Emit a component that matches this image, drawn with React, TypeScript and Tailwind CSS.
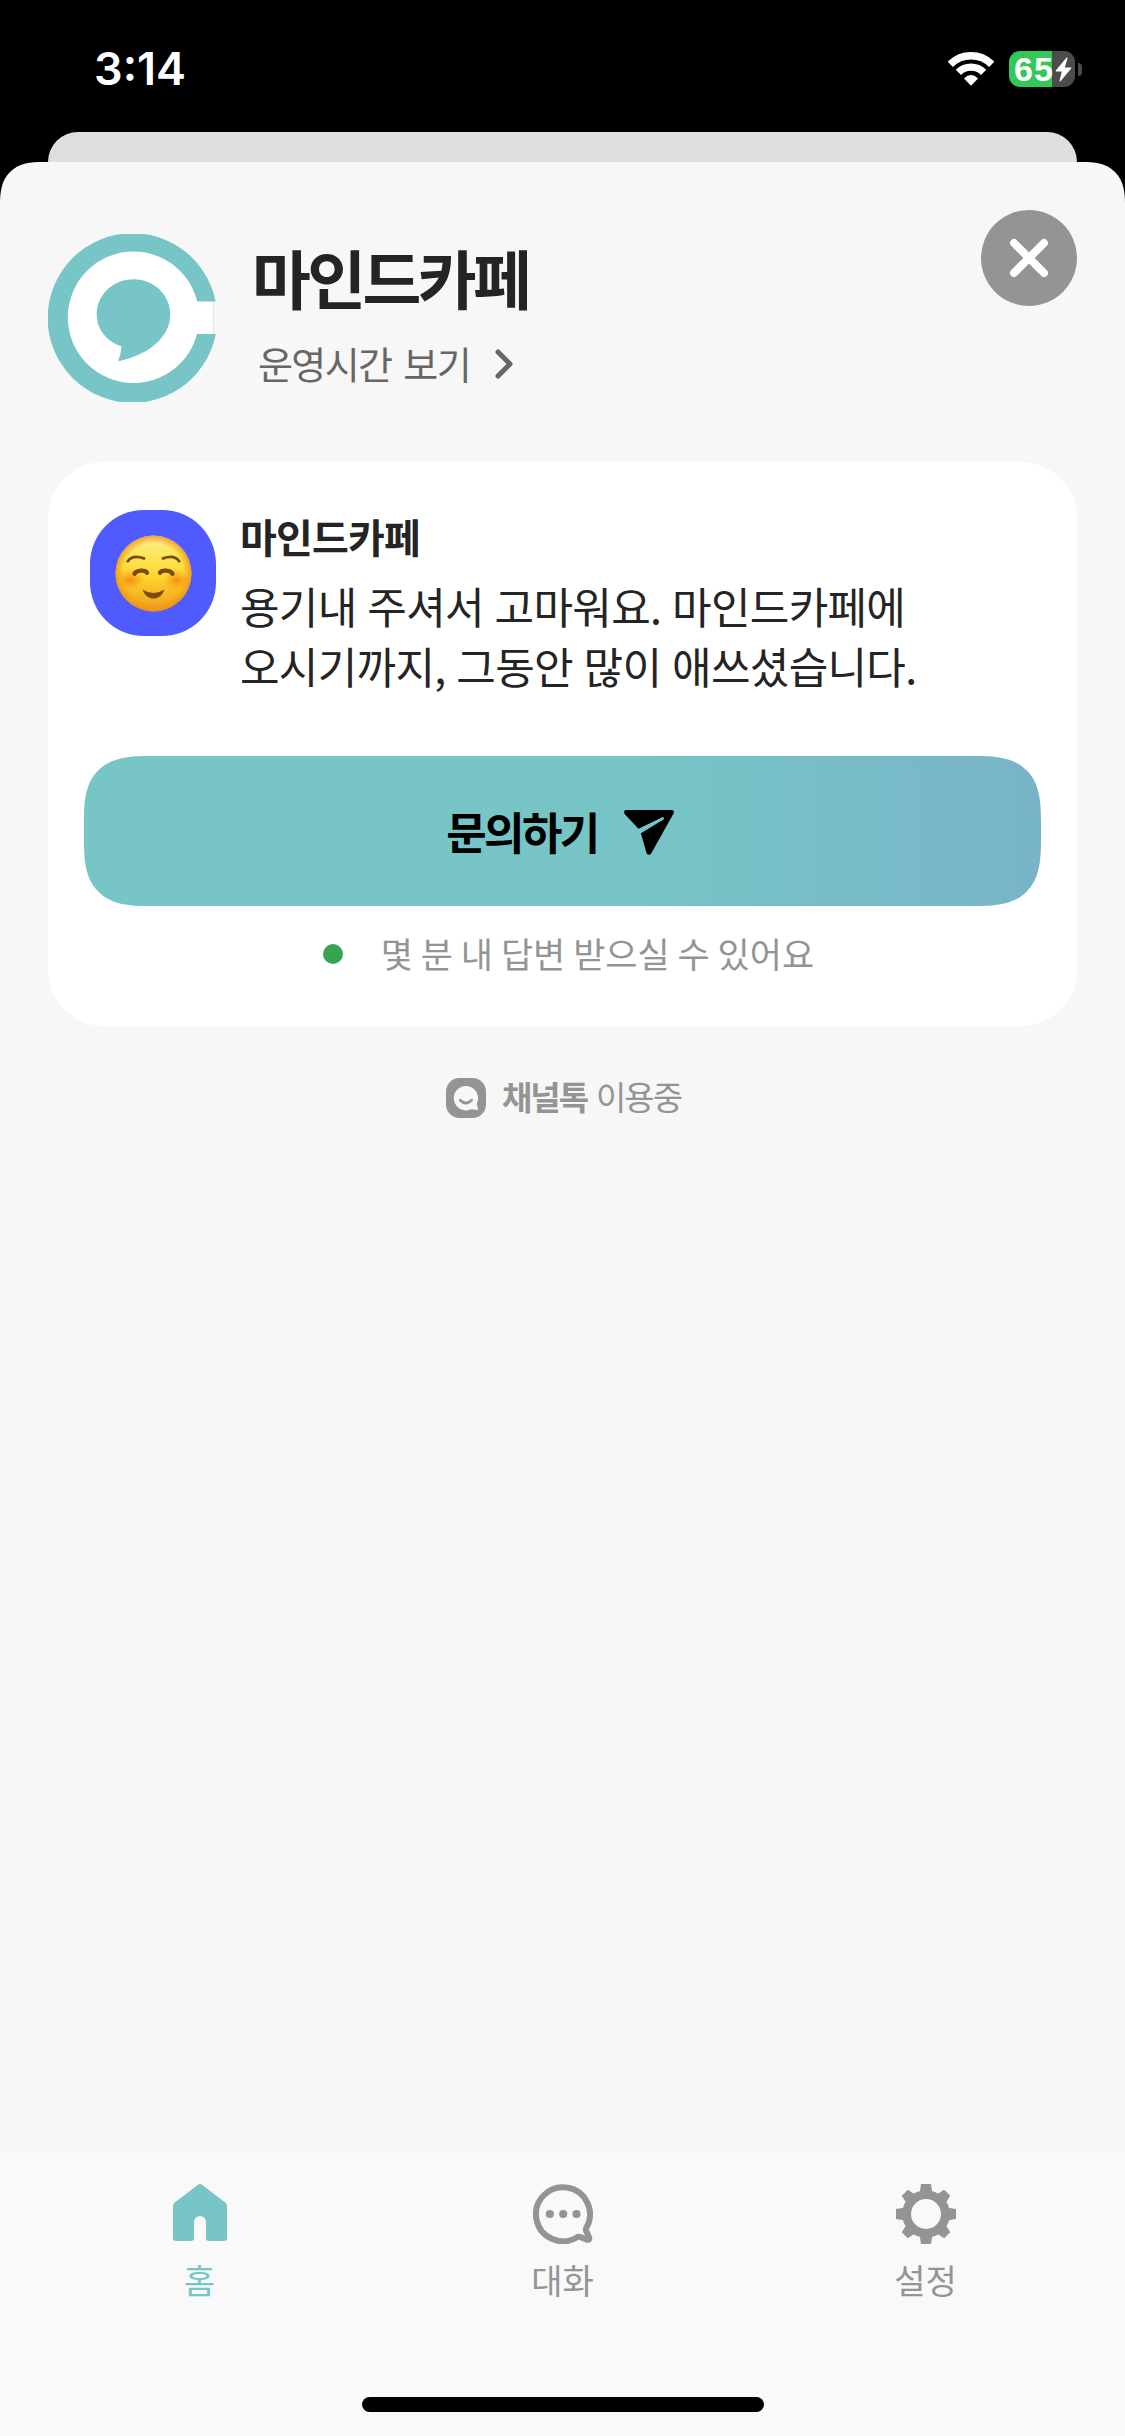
import type { ReactNode } from "react";

function WifiIcon() {
  return (
    <svg width="46" height="34" viewBox="0 0 46 34" fill="none">
      <path d="M2.3 12.3A29.3 29.3 0 0 1 43.7 12.3" stroke="#fff" strokeWidth="7.4" />
      <path d="M10.4 20.4A17.8 17.8 0 0 1 35.6 20.4" stroke="#fff" strokeWidth="7.4" />
      <path d="M16 26.4Q23 19.8 30 26.4L24 32.8Q23 33.8 22 32.8Z" fill="#fff" />
    </svg>
  );
}

function BoltIcon() {
  return (
    <svg width="17" height="25" viewBox="0 0 17 25">
      <path
        d="M11.6 0.6L0.8 13.6Q0.4 14.5 1.4 14.5H6.8L4.5 24Q4.6 25 5.5 24.2L16.2 11.4Q16.6 10.5 15.6 10.5H9.8L12.6 1Q12.5 0 11.6 0.6Z"
        fill="#fff"
      />
    </svg>
  );
}

function CafeLogo() {
  return (
    <svg width="168" height="168" viewBox="0 0 168 168">
      <circle cx="84.5" cy="84" r="84.8" fill="#77c5c6" />
      <circle cx="85.5" cy="83.3" r="65.7" fill="#fff" />
      <path d="M140 67.5H165.5V100H140Z" fill="#fff" />
      <path d="M165.5 67.5H170V100H165.5Z" fill="#f7f7f7" />
      <path
        d="M85.5 45.3C106 45.3 122.3 61 122.3 80.5C122.3 104 99 121.5 70.3 127.3C71.8 122.5 73.2 117.5 73.4 112.3C58.5 107.5 48.7 95 48.7 80.5C48.7 61 65 45.3 85.5 45.3Z"
        fill="#77c5c6"
      />
    </svg>
  );
}

function SmileEmoji() {
  return (
    <svg width="77" height="77" viewBox="0 0 77 77" fill="none">
      <defs>
        <linearGradient id="face" x1="0" y1="0" x2="0" y2="1">
          <stop offset="0" stopColor="#fdeb9a" />
          <stop offset="0.25" stopColor="#fde75a" />
          <stop offset="0.55" stopColor="#fcd52c" />
          <stop offset="1" stopColor="#f0991c" />
        </linearGradient>
        <radialGradient id="edge" cx="0.5" cy="0.5" r="0.5">
          <stop offset="0.78" stopColor="#f29a12" stopOpacity="0" />
          <stop offset="1" stopColor="#ee8e10" stopOpacity="0.8" />
        </radialGradient>
        <radialGradient id="cheek">
          <stop offset="0" stopColor="#fb8414" stopOpacity="0.9" />
          <stop offset="1" stopColor="#fb9b16" stopOpacity="0" />
        </radialGradient>
      </defs>
      <circle cx="38.5" cy="38.5" r="38" fill="url(#face)" />
      <circle cx="38.5" cy="38.5" r="38" fill="url(#edge)" />
      <ellipse cx="15" cy="45" rx="15" ry="11" fill="url(#cheek)" />
      <ellipse cx="62" cy="45" rx="14" ry="11" fill="url(#cheek)" />
      <path
        d="M12.8 26.2C16 21.5 22 20.8 29 23.4M64.2 26.2C61 21.5 55 20.8 48 23.4"
        stroke="#7a4a06"
        strokeWidth="2.8"
        strokeLinecap="round"
      />
      <path
        d="M19.5 38.8C21.5 34.8 30.5 34.800 32 37.800M57.500 38.800C55.500 34.800 46.500 34.800 45 37.800"
        stroke="#7a4a06"
        strokeWidth="4.2"
        strokeLinecap="round"
      />
      <path d="M27.5 54.5Q38.5 61.5 49.5 54.5C47 61 43 63.5 38.5 63.5C34 63.5 30 61 27.5 54.5Z" fill="#7a4a06" />
    </svg>
  );
}

function SendIcon() {
  return (
    <svg className="mt-[2px]" width="50" height="45" viewBox="0 0 50 45">
      <path
        d="M1.8 0H48.2Q50.8 0.8 49.5 3.5L27.2 43.4Q24.7 46.2 22.6 43.2L16.9 23.3L39.5 9.4Q40.9 7.5 38.8 6.9L14.5 18.7L0.6 4Q-0.8 0.8 1.8 0Z"
        fill="#000"
      />
    </svg>
  );
}

function ChannelIcon() {
  return (
    <svg className="mt-[3px]" width="40" height="40" viewBox="0 0 40 40" fill="none">
      <rect width="40" height="40" rx="13.5" fill="#949494" />
      <path
        d="M19.8 8A12.2 12.2 0 0 1 31 25.2Q30.6 27 32 30.5Q32.3 32.3 30.5 32.1Q26.5 31 25 31.3A12.2 12.2 0 1 1 19.8 8Z"
        fill="#f7f7f7"
      />
      <path d="M14.3 22.3Q19.9 27.8 25.6 22.3" stroke="#949494" strokeWidth="2.8" strokeLinecap="round" />
    </svg>
  );
}

function HomeIcon() {
  return (
    <svg width="54" height="57" viewBox="0 0 54 57">
      <path
        d="M25.4 0.6Q27 -0.4 28.6 0.6L52.3 18.5Q54 20 54 22.2V54Q54 57 51 57H36Q33 57 33 54V38A6 6 0 0 0 21 38V54Q21 57 18 57H3Q0 57 0 54V22.2Q0 20 1.7 18.5Z"
        fill="#77c5c6"
      />
    </svg>
  );
}

function ChatIcon() {
  return (
    <svg width="60" height="60" viewBox="0 0 60 60" fill="none">
      <path
        d="M53.2 44A27 27 0 1 0 44.5 53Q45.8 52.3 47.3 53L54 55.7Q56.8 56.3 56.2 53.7L53 46.5Q52.6 45.2 53.2 44Z"
        stroke="#949494"
        strokeWidth="6"
        strokeLinejoin="round"
      />
      <circle cx="16.8" cy="30" r="4.1" fill="#949494" />
      <circle cx="30.2" cy="30" r="4.1" fill="#949494" />
      <circle cx="43.5" cy="30" r="4.1" fill="#949494" />
    </svg>
  );
}

function GearIcon() {
  return (
    <svg width="60" height="60" viewBox="-30 -30 60 60" fill="none">
      <circle r="19.4" stroke="#949494" strokeWidth="8.8" />
      {[0, 90, 180, 270].map((deg) => (
        <path key={deg} d="M-5 -30H5L6.2 -22H-6.2Z" fill="#949494" transform={`rotate(${deg})`} />
      ))}
      {[45, 135, 225, 315].map((deg) => (
        <path key={deg} d="M-4.3 -30H4.3L6 -22H-6Z" fill="#949494" transform={`rotate(${deg})`} />
      ))}
    </svg>
  );
}

function StatusBar() {
  return (
    <header className="flex h-[132px] items-start justify-between pl-[94px] pr-[43px]">
      <span className="pt-[42px] font-['Inter'] text-[45px] font-semibold leading-[54px] text-white">3:14</span>
      <div className="flex items-center pt-[51px]">
        <WifiIcon />
        <div className="ml-[15px] flex h-9 w-[66px] items-center rounded-[11px] bg-[linear-gradient(90deg,#34c759_43px,#4c4c4c_43px)] pl-[5px]">
          <span className="mr-[1px] w-10 font-['Liberation_Sans'] text-[34px] font-bold leading-9 tracking-[1px] text-white">
            65
          </span>
          <BoltIcon />
        </div>
        <div className="ml-[3px] h-[13px] w-1 rounded-r-full bg-[#4c4c4c]" />
      </div>
    </header>
  );
}

type TabProps = { icon: ReactNode; label: string; active?: boolean };

function Tab({ icon, label, active }: TabProps) {
  return (
    <button className="flex flex-1 flex-col items-center">
      <span className="flex h-[60px] items-start">{icon}</span>
      <span className={`mt-[14px] text-[34px] leading-[44px] ${active ? "text-[#77c5c6]" : "text-[#949494]"}`}>
        {label}
      </span>
    </button>
  );
}

export default function App() {
  return (
    <div className="flex h-[2436px] w-[1125px] flex-col overflow-hidden bg-black font-['Noto_Sans_CJK_KR',sans-serif]">
      <StatusBar />
      {/* Edge of the screen behind the sheet */}
      <div className="mx-12 h-[30px] shrink-0 rounded-t-[30px] bg-[#dfdfdf]" />

      <main className="flex flex-1 flex-col overflow-hidden rounded-t-[42px] bg-[#f7f7f7] [corner-shape:superellipse(1.35)]">
        <section className="flex h-[300px] px-12 pt-12">
          <div className="mt-6 size-[168px]">
            <CafeLogo />
          </div>
          <div className="ml-9 mt-[30px] flex flex-1 flex-col">
            <h1 className="text-[64px] font-bold leading-[72px] tracking-[-3.6px] text-[#242424]">마인드카페</h1>
            <button className="mt-7 flex items-center gap-[25px] pl-[6px] text-[#666]">
              <span className="text-[38px] leading-[46px] tracking-[-1.6px] [word-spacing:5px]">운영시간 보기</span>
              <svg className="mt-[2px]" width="18" height="30" viewBox="0 0 18 30" fill="none">
                <path d="M3 3L15 15L3 27" stroke="#666" strokeWidth="5" strokeLinecap="round" strokeLinejoin="round" />
              </svg>
            </button>
          </div>
          <button className="flex size-24 items-center justify-center rounded-full bg-[#949494]">
            <svg width="40" height="40" viewBox="0 0 40 40">
              <path d="M5 5L35 35M35 5L5 35" stroke="#fff" strokeWidth="8" strokeLinecap="round" />
            </svg>
          </button>
        </section>

        <section className="mx-12 flex h-[564px] flex-col rounded-[56px] bg-white px-9 pt-12">
          <div className="flex h-[246px] pl-[6px]">
            <div className="flex size-[126px] shrink-0 items-center justify-center rounded-[54px] bg-[#4f5bff]">
              <SmileEmoji />
            </div>
            <div className="ml-6 pt-[2px] text-[#242424]">
              <h2 className="text-[40px] font-bold leading-[48px] tracking-[-0.8px]">마인드카페</h2>
              <p className="mt-[15px] text-[43px] leading-[60px] tracking-[-0.7px] [word-spacing:1.8px]">
                용기내 주셔서 고마워요. 마인드카페에
                <br />
                오시기까지, 그동안 많이 애쓰셨습니다.
              </p>
            </div>
          </div>
          <button className="flex h-[150px] items-center justify-center gap-[26px] rounded-[66px] bg-[linear-gradient(90deg,#77c5c6_58%,#78b4c8_100%)] pr-[5px] [corner-shape:superellipse(1.5)]">
            <span className="text-[44px] font-bold leading-[60px] tracking-[-2.6px] text-black">문의하기</span>
            <SendIcon />
          </button>
          <div className="mt-[23px] flex items-center justify-center gap-[38px] pl-3">
            <span className="mt-[2px] size-5 rounded-full bg-[#36a552]" />
            <span className="text-[35px] leading-[48px] text-[#949494]">몇 분 내 답변 받으실 수 있어요</span>
          </div>
        </section>

        <div className="mt-[46px] flex items-center justify-center pl-[2px] text-[33px] leading-[48px] text-[#949494]">
          <ChannelIcon />
          <span className="ml-4 font-bold tracking-[-2px]">채널톡</span>
          <span className="ml-[9px] tracking-[-2px]">이용중</span>
        </div>

        <nav className="mt-auto flex h-[282px] flex-col items-center bg-[#f9f9f9]">
          <div className="flex w-full flex-1 px-[18px] pt-[30px]">
            <Tab icon={<HomeIcon />} label="홈" active />
            <Tab icon={<ChatIcon />} label="대화" />
            <Tab icon={<GearIcon />} label="설정" />
          </div>
          <div className="mb-6 h-[15px] w-[402px] rounded-full bg-black" />
        </nav>
      </main>
    </div>
  );
}
